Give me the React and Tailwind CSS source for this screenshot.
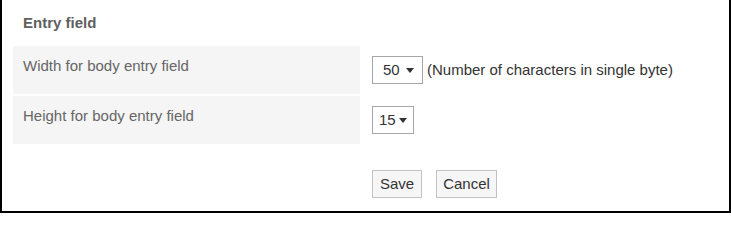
import React from 'react';

function Select({ value, width, gap }) {
  return (
    <div
      className={`flex h-[28px] items-center border border-[#a6a6a6] bg-white text-[15px] leading-[18px] text-[#333] ${width}`}
    >
      <span className={gap}>{value}</span>
      <svg width="8" height="5" viewBox="0 0 8 5" className="shrink-0">
        <path d="M0 0h8L4 5z" fill="#333" />
      </svg>
    </div>
  );
}

function Button({ children, width }) {
  return (
    <button
      type="button"
      className={`h-[28px] border border-[#c2c2c2] bg-[#f6f6f6] text-[15px] leading-[18px] text-[#333] ${width}`}
    >
      {children}
    </button>
  );
}

export default function App() {
  return (
    <div
      className="h-[213px] w-[731px] border-x-2 border-b-2 border-black bg-white"
      style={{ fontFamily: '"Liberation Sans", Arial, sans-serif' }}
    >
      <div className="pl-[21px] pt-[14px] text-[15px] font-bold leading-[18px] text-[#606060]">Entry field</div>

      <div className="ml-[11px] mt-[14px] grid grid-cols-[347px_1fr] gap-y-[2px]">
        <div className="h-[48px] bg-[#f5f5f5] pl-[10px] pt-[11px] text-[15px] leading-[18px] text-[#666]">
          Width for body entry field
        </div>
        <div className="flex items-start pl-[12px] pt-[10px]">
          <Select value="50" width="w-[51px] pl-[10px]" gap="mr-[6px]" />
          <span className="ml-[4px] mt-[5px] text-[15px] leading-[18px] text-[#333]">
            (Number of characters in single byte)
          </span>
        </div>

        <div className="h-[48px] bg-[#f5f5f5] pl-[10px] pt-[11px] text-[15px] leading-[18px] text-[#666]">
          Height for body entry field
        </div>
        <div className="flex items-start pl-[12px] pt-[10px]">
          <Select value="15" width="w-[42px] pl-[6px]" gap="mr-[3px]" />
        </div>

        <div />
        <div className="flex gap-[14px] pl-[12px] pt-[24px]">
          <Button width="w-[50px]">Save</Button>
          <Button width="w-[61px]">Cancel</Button>
        </div>
      </div>
    </div>
  );
}
